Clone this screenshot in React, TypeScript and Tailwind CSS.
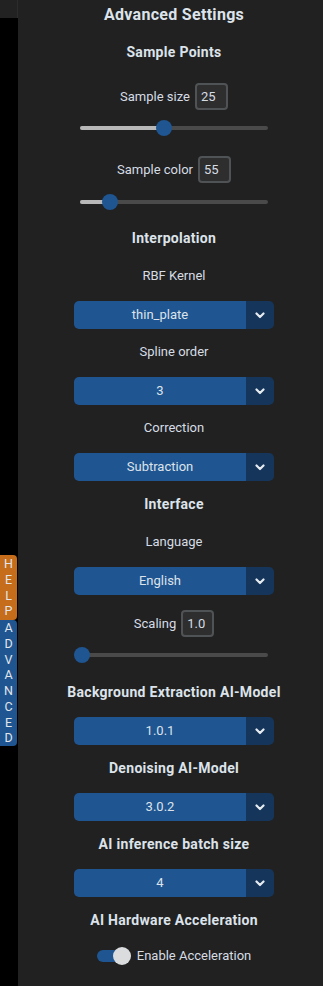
import React from "react"

const font = { fontFamily: "Roboto, 'Noto Sans', sans-serif" }

function Heading({ children, className = "" }: { children: React.ReactNode; className?: string }) {
  return (
    <div className={`h-[20px] leading-[20px] text-center text-[14px] font-bold tracking-[0.3px] text-[#dde3ea] ${className}`}>
      {children}
    </div>
  )
}

function Label({ children, className = "" }: { children: React.ReactNode; className?: string }) {
  return <div className={`h-[20px] leading-[20px] text-center text-[13px] text-[#d6dce4] ${className}`}>{children}</div>
}

function NumberRow({ label, value, className = "" }: { label: string; value: string; className?: string }) {
  return (
    <div className={`flex h-[27px] items-center justify-center gap-[5px] ${className}`}>
      <span className="text-[13px] text-[#d6dce4]">{label}</span>
      <span className="flex h-[27px] w-[33px] items-center pl-[4px] rounded-[4px] border-2 border-[#505356] bg-[#2e2e2e] text-[13px] text-[#d6dce4]">
        {value}
      </span>
    </div>
  )
}

function Slider({ thumb, className = "" }: { thumb: number; className?: string }) {
  // thumb = x offset of thumb centre from track start, in px
  return (
    <div className={`relative mx-auto h-[16px] w-[188px] ${className}`}>
      <div className="absolute left-0 right-0 top-[6px] h-[4px] rounded-full bg-[#4a4a4a]" />
      <div className="absolute left-0 top-[6px] h-[4px] rounded-full bg-[#b8b8b8]" style={{ width: thumb }} />
      <div
        className="absolute top-0 h-[16px] w-[16px] rounded-full bg-[#1f5591]"
        style={{ left: thumb - 8 }}
      />
    </div>
  )
}

function Select({ value, className = "" }: { value: string; className?: string }) {
  return (
    <div className={`mx-auto flex h-[28px] w-[200px] overflow-hidden rounded-[5px] ${className}`}>
      <div className="flex flex-1 items-center justify-center bg-[#1f5591] text-[13px] text-[#dde3ea]">{value}</div>
      <div className="flex w-[28px] items-center justify-center bg-[#16355b]">
        <svg width="10" height="7" viewBox="0 0 10 7">
          <path d="M1.5 1.5 L5 5 L8.5 1.5" fill="none" stroke="#e6ebf0" strokeWidth="2.2" strokeLinecap="round" strokeLinejoin="round" />
        </svg>
      </div>
    </div>
  )
}

function SideTab({ text, className }: { text: string; className: string }) {
  return (
    <div className={`flex w-[17px] flex-col items-center rounded-r-[4px] ${className}`}>
      {text.split("").map((c, i) => (
        <span key={i} className="h-[15.75px] leading-[15.75px] text-[12.5px] text-[#e2e6ea]">
          {c}
        </span>
      ))}
    </div>
  )
}

export default function App() {
  return (
    <div className="flex h-[986px] w-[323px] overflow-hidden bg-black" style={font}>
      <div className="flex w-[18px] flex-col">
        <div className="h-[18px] w-[18px] border-r border-[#2c2c2c] bg-[#222222]" />
        <div className="mt-[537px] flex flex-col">
          <SideTab text="HELP" className="bg-[#c56d1b] py-[1px]" />
          <SideTab text="ADVANCED" className="bg-[#1f5591] py-[0px]" />
        </div>
      </div>
      <div className="flex-1 bg-[#212121] pl-[7px]">
        <div className="h-[20px] pt-[5px] text-center text-[16px] font-bold leading-[20px] tracking-[0.3px] text-[#dde3ea]">
          Advanced Settings
        </div>
        <Heading className="mt-[22px]">Sample Points</Heading>
        <NumberRow label="Sample size" value="25" className="mt-[21px]" />
        <Slider thumb={84} className="mt-[10px]" />
        <NumberRow label="Sample color" value="55" className="mt-[20px]" />
        <Slider thumb={30} className="mt-[11px]" />

        <Heading className="mt-[18px]">Interpolation</Heading>
        <Label className="mt-[18px]">RBF Kernel</Label>
        <Select value="thin_plate" className="mt-[15px]" />
        <Label className="mt-[13px]">Spline order</Label>
        <Select value="3" className="mt-[15px]" />
        <Label className="mt-[13px]">Correction</Label>
        <Select value="Subtraction" className="mt-[15px]" />

        <Heading className="mt-[13px]">Interface</Heading>
        <Label className="mt-[18px]">Language</Label>
        <Select value="English" className="mt-[15px]" />
        <NumberRow label="Scaling" value="1.0" className="mt-[15px]" />
        <Slider thumb={2} className="mt-[10px]" />

        <Heading className="mt-[19px]">Background Extraction AI-Model</Heading>
        <Select value="1.0.1" className="mt-[15px]" />
        <Heading className="mt-[13px]">Denoising AI-Model</Heading>
        <Select value="3.0.2" className="mt-[15px]" />
        <Heading className="mt-[13px]">AI inference batch size</Heading>
        <Select value="4" className="mt-[15px]" />
        <Heading className="mt-[13px]">AI Hardware Acceleration</Heading>

        <div className="mt-[16px] flex h-[20px] items-center justify-center gap-[6px]">
          <div className="relative h-[20px] w-[34px]">
            <div className="absolute left-0 top-[4px] h-[12px] w-[30px] rounded-full bg-[#1f5591]" />
            <div className="absolute right-0 top-[1px] h-[18px] w-[18px] rounded-full bg-[#dadcde]" />
          </div>
          <span className="text-[13px] text-[#d6dce4]">Enable Acceleration</span>
        </div>
      </div>
    </div>
  )
}
